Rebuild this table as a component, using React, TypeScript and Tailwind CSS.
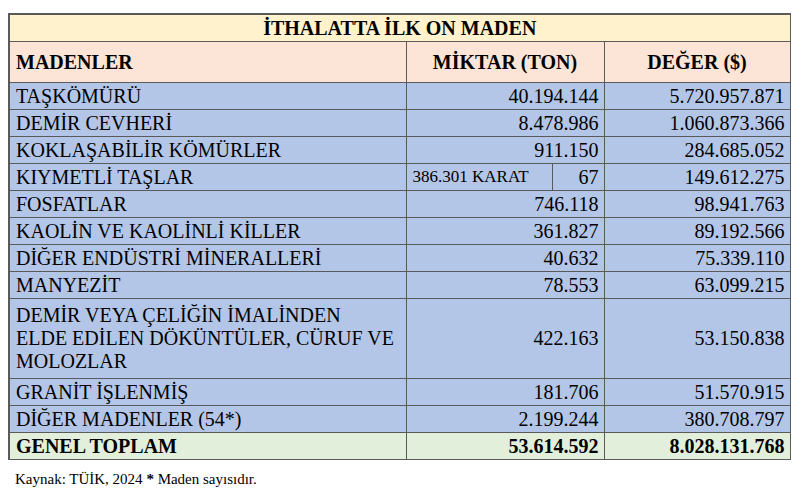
import React from "react";

const rows: [React.ReactNode, string, string][] = [
  ["TAŞKÖMÜRÜ", "40.194.144", "5.720.957.871"],
  ["DEMİR CEVHERİ", "8.478.986", "1.060.873.366"],
  ["KOKLAŞABİLİR KÖMÜRLER", "911.150", "284.685.052"],
  ["KIYMETLİ TAŞLAR", "67", "149.612.275"],
  ["FOSFATLAR", "746.118", "98.941.763"],
  ["KAOLİN VE KAOLİNLİ KİLLER", "361.827", "89.192.566"],
  ["DİĞER ENDÜSTRİ MİNERALLERİ", "40.632", "75.339.110"],
  ["MANYEZİT", "78.553", "63.099.215"],
  [
    <>
      DEMİR VEYA ÇELİĞİN İMALİNDEN
      <br />
      ELDE EDİLEN DÖKÜNTÜLER, CÜRUF VE
      <br />
      MOLOZLAR
    </>,
    "422.163",
    "53.150.838",
  ],
  ["GRANİT İŞLENMİŞ", "181.706", "51.570.915"],
  ["DİĞER MADENLER (54*)", "2.199.244", "380.708.797"],
];

export default function App() {
  return (
    <div className="w-[801px] h-[488px] bg-white text-black font-['Liberation_Serif','Times_New_Roman',serif]">
      <div className="pl-[8px] pt-[13px]">
        <table className="border-collapse table-fixed w-[781px] text-[20px] leading-none">
          <colgroup>
            <col className="w-[397px]" />
            <col className="w-[198px]" />
            <col className="w-[186px]" />
          </colgroup>
          <tbody>
            <tr className="h-[27px] bg-[#fff2cc]">
              <td colSpan={3} className="border border-[#5a5a5a] border-l-2 border-t-2 text-center font-bold">
                İTHALATTA İLK ON MADEN
              </td>
            </tr>
            <tr className="h-[41px] bg-[#fce4d6] font-bold">
              <td className="border border-[#5a5a5a] border-l-2 pl-[6px]">MADENLER</td>
              <td className="border border-[#5a5a5a] text-center">MİKTAR (TON)</td>
              <td className="border border-[#5a5a5a] text-center">DEĞER ($)</td>
            </tr>
            {rows.map(([n, m, v], i) => {
              const multi = i === 8;
              const karat = i === 3;
              return (
                <tr key={i} className={`${multi ? "h-[80px]" : "h-[27px]"} bg-[#b4c6e7]`}>
                  <td className={`border border-[#5a5a5a] border-l-2 pl-[6px] pr-[6px] ${multi ? "leading-[23px]" : ""}`}>
                    {n}
                  </td>
                  {karat ? (
                    <td className="border border-[#5a5a5a] p-0">
                      <div className="flex h-[26px] items-center">
                        <div className="w-[145px] pl-[6px] text-[17px]">386.301 KARAT</div>
                        <div className="flex-1 h-full flex items-center justify-end pr-[5px] border-l border-[#5a5a5a]">
                          {m}
                        </div>
                      </div>
                    </td>
                  ) : (
                    <td className="border border-[#5a5a5a] text-right pr-[5px]">{m}</td>
                  )}
                  <td className="border border-[#5a5a5a] text-right pr-[5px]">{v}</td>
                </tr>
              );
            })}
            <tr className="h-[27px] bg-[#e2efda] font-bold">
              <td className="border border-[#5a5a5a] border-l-2 pl-[6px]">GENEL TOPLAM</td>
              <td className="border border-[#5a5a5a] text-right pr-[5px]">53.614.592</td>
              <td className="border border-[#5a5a5a] text-right pr-[5px]">8.028.131.768</td>
            </tr>
          </tbody>
        </table>
        <div className="mt-[12px] pl-[7px] text-[15px] leading-none">
          Kaynak: TÜİK, 2024 <b>*</b> Maden sayısıdır.
        </div>
      </div>
    </div>
  );
}
